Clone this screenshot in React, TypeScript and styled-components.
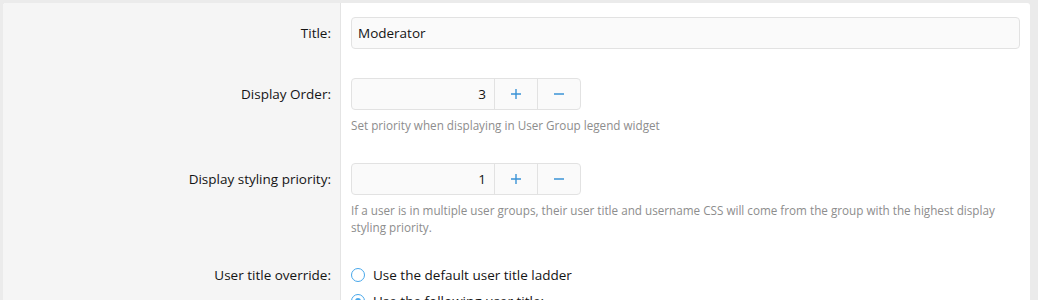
import React from "react";
import styled, { createGlobalStyle } from "styled-components";

const Global = createGlobalStyle`
  html, body { margin: 0; padding: 0; }
  body {
    background: #ebebeb;
    font-family: "Open Sans", "Noto Sans", sans-serif;
    color: #141414;
    width: 1038px;
    height: 300px;
    overflow: hidden;
  }
`;

const Page = styled.div`
  padding: 3px 8px 0 3px;
`;

const Block = styled.div`
  background: #fff;
  border-radius: 3px 3px 0 0;
  overflow: hidden;
`;

const Row = styled.dl`
  display: grid;
  grid-template-columns: 338px 1fr;
  margin: 0;
`;

const Label = styled.dt<{ $pt: number }>`
  background: #f5f5f5;
  border-right: 1px solid #e4e4e4;
  text-align: right;
  padding: ${(p) => p.$pt}px 9px 14px 10px;
  font-size: 13.5px;
  line-height: 18px;
  color: #141414;
`;

const Field = styled.dd<{ $pt: number }>`
  margin: 0;
  padding: ${(p) => p.$pt}px 10px 14px 10px;
`;

const TextInput = styled.div`
  height: 32px;
  box-sizing: border-box;
  border: 1px solid #e2e2e2;
  border-radius: 4px;
  background: #fafafa;
  padding: 0 6px;
  display: flex;
  align-items: center;
  font-size: 13.5px;
  color: #141414;
`;

const NumberGroup = styled.div`
  display: inline-flex;
  height: 32px;
  box-sizing: border-box;
  border: 1px solid #e2e2e2;
  border-radius: 4px;
  background: #fafafa;
  overflow: hidden;
`;

const NumberValue = styled.div`
  width: 142px;
  box-sizing: border-box;
  padding: 0 8px;
  display: flex;
  align-items: center;
  justify-content: flex-end;
  font-size: 13.5px;
  color: #141414;
`;

const StepButton = styled.div`
  width: 42px;
  border-left: 1px solid #e2e2e2;
  display: flex;
  align-items: center;
  justify-content: center;
  color: #3a93d6;
`;

const Hint = styled.div`
  margin-top: 7px;
  font-size: 11.7px;
  line-height: 17px;
  color: #8d8d8d;
`;

const RadioList = styled.div`
  display: flex;
  flex-direction: column;
  gap: 8px;
`;

const RadioItem = styled.label`
  display: flex;
  align-items: center;
  gap: 8px;
  font-size: 13.5px;
  line-height: 18px;
  color: #141414;
`;

const RadioCircle = styled.span<{ $checked?: boolean }>`
  width: 12px;
  height: 12px;
  border: 1.5px solid #47a7eb;
  border-radius: 50%;
  flex: none;
  position: relative;
  ${(p) =>
    p.$checked
      ? `&::after { content: ""; position: absolute; inset: 3px; border-radius: 50%; background: #47a7eb; }`
      : ""}
`;

const Plus = () => (
  <svg width="12" height="12" viewBox="0 0 12 12">
    <path d="M6 1v10M1 6h10" stroke="currentColor" strokeWidth="1.4" />
  </svg>
);
const Minus = () => (
  <svg width="12" height="12" viewBox="0 0 12 12">
    <path d="M1 6h10" stroke="currentColor" strokeWidth="1.4" />
  </svg>
);

const NumberInput = ({ value }: { value: number }) => (
  <NumberGroup>
    <NumberValue>{value}</NumberValue>
    <StepButton>
      <Plus />
    </StepButton>
    <StepButton>
      <Minus />
    </StepButton>
  </NumberGroup>
);

export default function App() {
  return (
    <>
      <Global />
      <Page>
        <Block>
          <Row>
            <Label $pt={21}>Title:</Label>
            <Field $pt={14}>
              <TextInput>Moderator</TextInput>
            </Field>
          </Row>
          <Row>
            <Label $pt={22}>Display Order:</Label>
            <Field $pt={15}>
              <NumberInput value={3} />
              <Hint>Set priority when displaying in User Group legend widget</Hint>
            </Field>
          </Row>
          <Row>
            <Label $pt={22}>Display styling priority:</Label>
            <Field $pt={15}>
              <NumberInput value={1} />
              <Hint>
                If a user is in multiple user groups, their user title and username CSS will come from the group
                with the highest display styling priority.
              </Hint>
            </Field>
          </Row>
          <Row>
            <Label $pt={16}>User title override:</Label>
            <Field $pt={16}>
              <RadioList>
                <RadioItem>
                  <RadioCircle />
                  Use the default user title ladder
                </RadioItem>
                <RadioItem>
                  <RadioCircle $checked />
                  Use the following user title:
                </RadioItem>
              </RadioList>
            </Field>
          </Row>
        </Block>
      </Page>
    </>
  );
}
